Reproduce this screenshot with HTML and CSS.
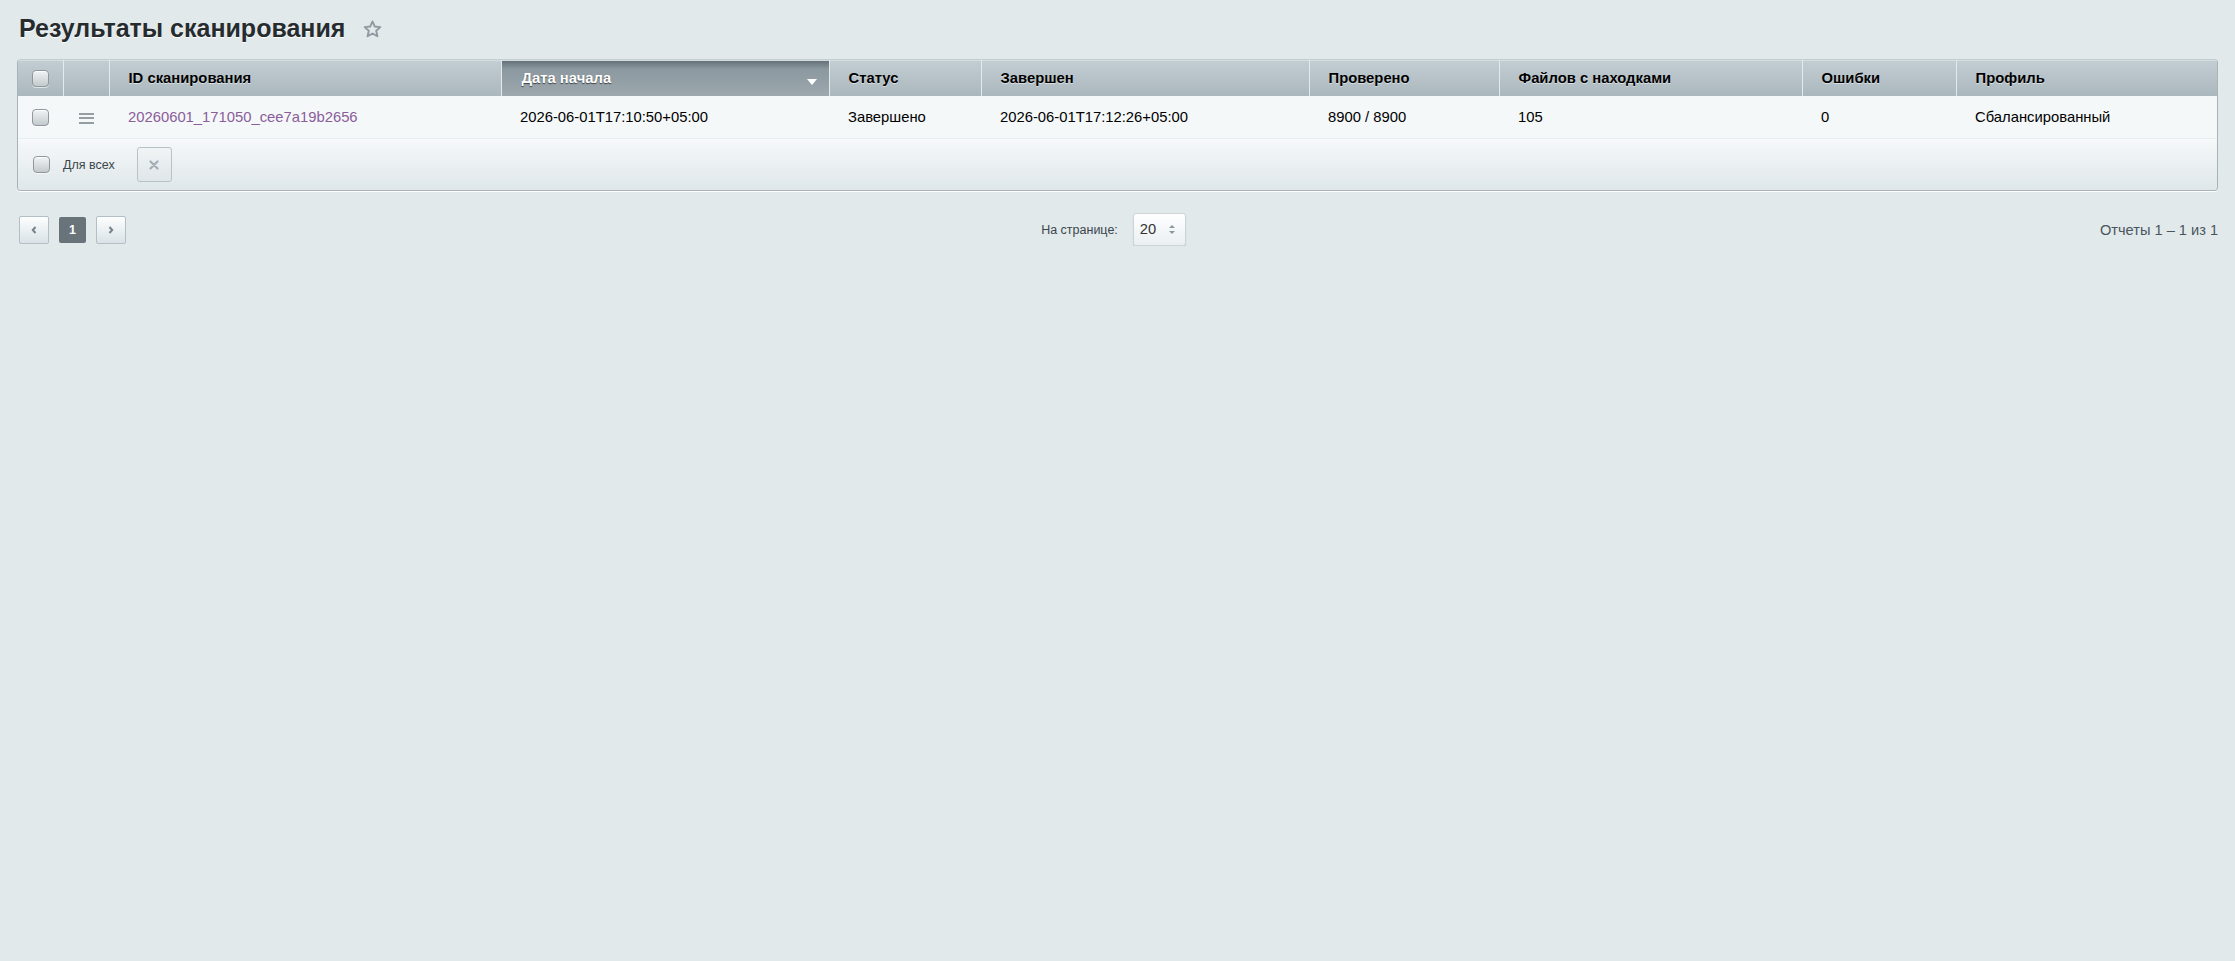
FILE: index.html
```html
<!DOCTYPE html>
<html lang="ru">
<head>
    <meta charset="UTF-8">
    <title>Результаты сканирования</title>
    <link rel="stylesheet" href="styles.css">
</head>
<body>
    <div class="page">
        <h1 class="title">Результаты сканирования
            <svg class="star" width="19" height="18" viewBox="0 0 20 19"><path d="M10 1.5l2.4 5.4 5.9.6-4.4 3.9 1.3 5.8L10 14.2l-5.2 3 1.3-5.8-4.4-3.9 5.9-.6z" fill="none" stroke="#8e99a0" stroke-width="2" stroke-linejoin="round"/></svg>
        </h1>

        <div class="grid-wrap">
            <table class="grid">
                <colgroup>
                    <col style="width:45px"><col style="width:46px"><col style="width:392px"><col style="width:328px"><col style="width:152px">
                    <col style="width:328px"><col style="width:190px"><col style="width:303px"><col style="width:154px"><col style="width:263px">
                </colgroup>
                <thead>
                    <tr>
                        <th class="c-check"><span class="chk"></span></th>
                        <th></th>
                        <th>ID сканирования</th>
                        <th class="sorted">Дата начала<span class="sort-arrow"></span></th>
                        <th>Статус</th>
                        <th>Завершен</th>
                        <th>Проверено</th>
                        <th>Файлов с находками</th>
                        <th>Ошибки</th>
                        <th>Профиль</th>
                    </tr>
                </thead>
                <tbody>
                    <tr>
                        <td class="c-check"><span class="chk"></span></td>
                        <td class="c-menu"><span class="burger"><i></i><i></i><i></i></span></td>
                        <td><a href="#" class="scan-link">20260601_171050_cee7a19b2656</a></td>
                        <td>2026-06-01T17:10:50+05:00</td>
                        <td>Завершено</td>
                        <td>2026-06-01T17:12:26+05:00</td>
                        <td>8900 / 8900</td>
                        <td>105</td>
                        <td>0</td>
                        <td>Сбалансированный</td>
                    </tr>
                </tbody>
            </table>
            <div class="grid-footer">
                <label class="for-all"><span class="chk"></span>Для всех</label>
                <button class="btn-delete" type="button">
                    <svg width="10" height="10" viewBox="0 0 10 10"><path d="M1.5 1.5l7 7M8.5 1.5l-7 7" stroke="#a4aeb3" stroke-width="2.2" stroke-linecap="round"/></svg>
                </button>
            </div>
        </div>

        <div class="nav">
            <div class="pager">
                <button class="pg-btn" type="button">
                    <svg width="6" height="8" viewBox="0 0 6 8"><path d="M4.5 1L1.8 4l2.7 3" fill="none" stroke="#75838a" stroke-width="2"/></svg>
                </button>
                <span class="pg-current">1</span>
                <button class="pg-btn" type="button">
                    <svg width="6" height="8" viewBox="0 0 6 8"><path d="M1.5 1l2.7 3-2.7 3" fill="none" stroke="#75838a" stroke-width="2"/></svg>
                </button>
            </div>
            <div class="per-page">
                <span>На странице:</span>
                <span class="select">20<span class="spin"></span></span>
            </div>
            <div class="counter">Отчеты 1 – 1 из 1</div>
        </div>
    </div>
</body>
</html>
```

FILE: styles.css
```css
body {
    margin: 0;
    background-color: #e2e9eb;
    font-family: "Liberation Sans", Arial, sans-serif;
    color: #000;
}
.page {
    padding: 13px 17px 0 17px;
}
.title {
    margin: 0 0 16px 2px;
    font-size: 25px;
    line-height: 30px;
    font-weight: bold;
    color: #262b2e;
    text-shadow: 0 1px 0 #fff;
    display: flex;
    align-items: center;
}
.star {
    margin-left: 18px;
    margin-top: 1px;
}
.grid-wrap {
    border: 1px solid #a8b3b8;
    border-top-color: #c3cdd1;
    border-radius: 4px;
    overflow: hidden;
    box-shadow: 0 1px 0 #fff;
}
.grid {
    width: 100%;
    border-collapse: collapse;
    table-layout: fixed;
}
.grid th {
    height: 36px;
    padding: 0 0 0 19px;
    text-align: left;
    font-size: 14.8px;
    font-weight: bold;
    color: #000;
    background: linear-gradient(#c3ced3, #aab7bd);
    border-left: 1px solid #e4eaec;
    box-shadow: inset 0 1px 0 #d4dde0;
    text-shadow: 0 1px 0 rgba(255, 255, 255, 0.5);
}
.grid th:first-child {
    border-left: none;
}
.grid th.c-check {
    padding: 0;
    text-align: center;
}
.grid th.sorted {
    position: relative;
    color: #fff;
    padding-left: 20px;
    background: linear-gradient(#5f6c74, #8c989f 25%, #9ca8ae);
    text-shadow: 0 1px 1px rgba(0, 0, 0, 0.6);
}
.sort-arrow {
    position: absolute;
    right: 12px;
    top: 19px;
    border-left: 5px solid transparent;
    border-right: 5px solid transparent;
    border-top: 6px solid #fff;
}
.grid td {
    height: 42px;
    padding: 0 0 0 19px;
    font-size: 14.8px;
    background-color: #f5f8f9;
    border-bottom: 1px solid #e8edef;
    white-space: nowrap;
}
.grid td.c-check {
    padding: 0;
    text-align: center;
}
.grid td.c-menu {
    padding: 0;
    text-align: center;
}
.scan-link {
    color: #8a5d9b;
    text-decoration: none;
}
.chk {
    display: inline-block;
    width: 15px;
    height: 15px;
    border: 1px solid #8e989d;
    border-radius: 4px;
    background: linear-gradient(#f1f3f4, #c4cacd);
    box-shadow: inset 0 1px 0 #fff, 0 1px 0 rgba(255, 255, 255, 0.6);
    vertical-align: middle;
}
.burger {
    display: inline-flex;
    flex-direction: column;
    gap: 2.5px;
    width: 15px;
    vertical-align: middle;
}
.burger i {
    display: block;
    height: 2px;
    background-color: #959ea3;
}
.grid-footer {
    height: 51px;
    display: flex;
    align-items: center;
    padding-left: 15px;
    background: linear-gradient(#f6f8f9, #dfe7ea);
}
.for-all {
    display: flex;
    align-items: center;
    font-size: 12.5px;
    color: #3b464c;
}
.for-all .chk {
    margin-right: 13px;
}
.btn-delete {
    margin-left: 22px;
    width: 35px;
    height: 35px;
    padding: 0;
    display: flex;
    align-items: center;
    justify-content: center;
    border: 1px solid #b8c3c7;
    border-radius: 3px;
    background: linear-gradient(#f1f4f5, #dfe6e9);
}
.nav {
    display: grid;
    grid-template-columns: 1fr auto 1fr;
    align-items: center;
    margin-top: 22px;
}
.pager {
    display: flex;
    align-items: center;
    gap: 10px;
    margin-left: 2px;
}
.pg-btn {
    width: 30px;
    height: 28px;
    padding: 0;
    display: flex;
    align-items: center;
    justify-content: center;
    border: 1px solid #b3bfc4;
    border-radius: 2px;
    background: linear-gradient(#fdfefe, #dae3e7);
}
.pg-current {
    width: 27px;
    height: 26px;
    line-height: 26px;
    text-align: center;
    border-radius: 2px;
    background-color: #68737a;
    color: #fff;
    font-size: 12.5px;
    font-weight: bold;
}
.per-page {
    display: flex;
    align-items: center;
    gap: 15px;
    margin-right: 8px;
    font-size: 12.5px;
    color: #3b464c;
}
.select {
    position: relative;
    width: 45px;
    height: 31px;
    line-height: 31px;
    padding-left: 6px;
    border: 1px solid #cdd5d9;
    border-radius: 3px;
    background: linear-gradient(#ffffff, #eaeff1);
    box-shadow: 0 1px 1px rgba(0, 0, 0, 0.2);
    font-size: 14.7px;
    color: #333;
}
.spin {
    position: absolute;
    right: 10px;
    top: 11px;
    width: 0;
    height: 9px;
    border-left: 3px solid transparent;
    border-right: 3px solid transparent;
}
.spin::before,
.spin::after {
    content: "";
    position: absolute;
    left: -3px;
    border-left: 3px solid transparent;
    border-right: 3px solid transparent;
}
.spin::before {
    top: 0;
    border-bottom: 3px solid #8c979c;
}
.spin::after {
    bottom: 0;
    border-top: 3px solid #8c979c;
}
.counter {
    text-align: right;
    font-size: 14.6px;
    color: #4a555b;
}
```
